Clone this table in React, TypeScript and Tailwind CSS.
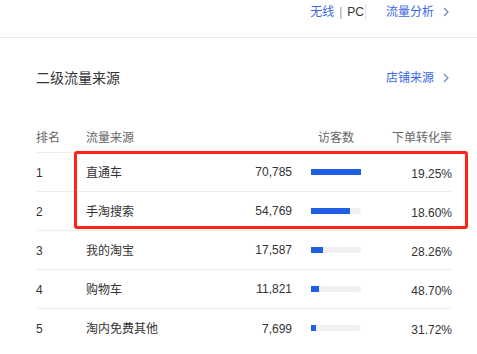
const rows = [
  { rank: 1, name: '直通车', uv: '70,785', bar: 50, rate: '19.25%' },
  { rank: 2, name: '手淘搜索', uv: '54,769', bar: 39, rate: '18.60%' },
  { rank: 3, name: '我的淘宝', uv: '17,587', bar: 12, rate: '28.26%' },
  { rank: 4, name: '购物车', uv: '11,821', bar: 8, rate: '48.70%' },
  { rank: 5, name: '淘内免费其他', uv: '7,699', bar: 5, rate: '31.72%' },
]

function Chevron() {
  return (
    <svg width="6" height="10" viewBox="0 0 6 10" className="ml-[9px]">
      <path d="M1 1l4 4-4 4" fill="none" stroke="#6f86c4" strokeWidth="1.2" />
    </svg>
  )
}

export default function App() {
  return (
    <div
      className="relative w-[477px] h-[354px] overflow-hidden bg-white text-[12px] text-[#333]"
      style={{ fontFamily: '"Liberation Sans", "Noto Sans CJK SC", sans-serif' }}
    >
      {/* top switch bar */}
      <div className="flex justify-end items-start h-[38px] pt-[4px] pr-[28px] border-b border-[#e6e6e6]">
        <div className="flex items-center h-[16px] leading-[16px]">
          <span className="text-[#3a67e8]">无线</span>
          <span className="mx-[5px] text-[#999]">|</span>
          <span className="text-[#333] pr-[1px] border-r border-[#ddd]">PC</span>
          <span className="ml-[20px] text-[#3a67e8]">流量分析</span>
          <Chevron />
        </div>
      </div>

      {/* section title */}
      <div className="flex items-center justify-between h-[20px] mt-[30px] pl-[36px] pr-[28px]">
        <span className="text-[14px] text-[#333]">二级流量来源</span>
        <div className="flex items-center">
          <span className="text-[#3a67e8]">店铺来源</span>
          <Chevron />
        </div>
      </div>

      {/* table */}
      <div className="mt-[35px] ml-[36px] w-[416px]">
        <div className="flex items-center h-[30px] text-[#666] border-b border-[#eeeeee]">
          <div className="w-[50px]">排名</div>
          <div className="flex-1">流量来源</div>
          <div className="w-[50px] text-center">访客数</div>
          <div className="w-[91px] text-right">下单转化率</div>
        </div>
        {rows.map((r) => (
          <div key={r.rank} className="flex items-center h-[39px] pt-[1px] border-b border-[#eeeeee] last:border-b-0">
            <div className="w-[50px]">{r.rank}</div>
            <div className="flex-1">{r.name}</div>
            <div className="w-[80px] text-right pb-[1px]">{r.uv}</div>
            <div className="w-[19px]" />
            <div className="w-[50px] h-[6px] rounded-r-full bg-[#f0f0f0] mb-[2px]">
              <div className="h-full bg-[#1f5fe6]" style={{ width: r.bar }} />
            </div>
            <div className="w-[91px] text-right pt-[2px]">{r.rate}</div>
          </div>
        ))}
      </div>

      {/* highlight annotation */}
      <div className="absolute left-[74px] top-[151px] w-[394px] h-[78px] border-[3px] border-[#ff2318] rounded-[3px] pointer-events-none" />
    </div>
  )
}
